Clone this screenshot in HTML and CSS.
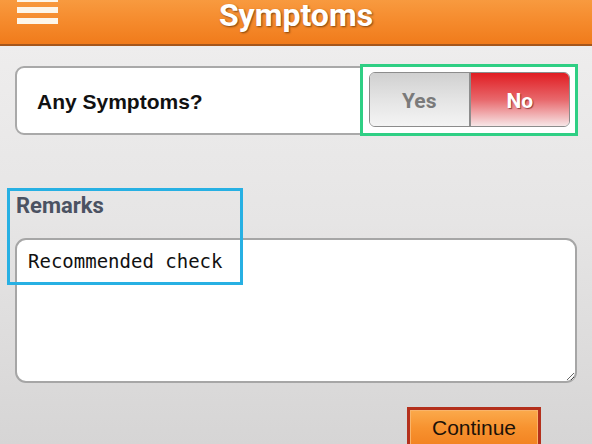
FILE: index.html
```html
<!DOCTYPE html>
<html lang="en">
<head>
<meta charset="utf-8">
<title>Symptoms</title>
<link rel="stylesheet" href="styles.css">
</head>
<body>
<header class="topbar">
  <div class="menu" aria-label="Menu"><span></span><span></span><span></span></div>
  <h1 class="title">Symptoms</h1>
  <div class="spacer"></div>
</header>
<main class="content">
  <section class="card">
    <span class="question">Any Symptoms?</span>
    <div class="mark-green">
      <div class="toggle">
        <button class="opt yes" type="button">Yes</button>
        <button class="opt no" type="button">No</button>
      </div>
    </div>
  </section>
  <section class="remarks">
    <label class="remarks-label" for="remarks">Remarks</label>
    <textarea id="remarks" class="remarks-box">Recommended check</textarea>
    <div class="mark-blue"></div>
  </section>
  <div class="actions">
    <button class="continue" type="button">Continue</button>
  </div>
</main>
</body>
</html>
```

FILE: styles.css
```css
html, body {
  margin: 0;
  padding: 0;
  height: 100%;
  overflow: hidden;
}
body {
  background: linear-gradient(to bottom, #f0efef 0%, #e6e5e5 50%, #d6d5d5 100%);
  font-family: "Liberation Sans", Arial, sans-serif;
}
.topbar {
  height: 44px;
  border-bottom: 2px solid #a4561c;
  background: linear-gradient(to bottom, #f89a3f 0%, #f58a2c 50%, #f07b1b 100%);
  display: grid;
  grid-template-columns: 1fr auto 1fr;
  align-items: start;
  overflow: hidden;
}
.menu {
  display: flex;
  flex-direction: column;
  gap: 5px;
  margin: -4px 0 0 17px;
  width: 41px;
}
.menu span {
  display: block;
  height: 6px;
  background: #fdf6ea;
}
.title {
  margin: 0;
  font-family: Roboto, "Liberation Sans", sans-serif;
  font-weight: 700;
  font-size: 32px;
  line-height: 30px;
  color: #ffffff;
  text-shadow: 1px 1px 2px rgba(80, 40, 0, 0.7);
}
.content {
  padding: 0 15px;
}
.card {
  margin-top: 20px;
  height: 65px;
  border: 2px solid #a9a9a9;
  border-radius: 9px;
  background: #ffffff;
  display: flex;
  align-items: center;
  justify-content: space-between;
  padding-left: 20px;
}
.question {
  font-weight: 700;
  font-size: 21px;
  color: #111111;
  padding-top: 2px;
}
.mark-green {
  margin: -4px -3px -3px 0;
  border: 3px solid #2fcf84;
  background: #ffffff;
  padding: 5px 5px 6px 6px;
}
.toggle {
  display: flex;
  width: 199px;
  height: 53px;
  border: 1px solid #8c8c8c;
  border-radius: 6px;
  overflow: hidden;
}
.opt {
  flex: 1;
  border: none;
  margin: 0;
  padding: 2px 0 0 0;
  font-family: Roboto, "Liberation Sans", sans-serif;
  font-weight: 700;
  font-size: 21px;
}
.yes {
  background: linear-gradient(to bottom, #d0d0d0 0%, #e4e4e4 50%, #f4f4f4 100%);
  color: #7a7a7a;
  border-right: 2px solid #8d8d8d;
}
.no {
  background: linear-gradient(to bottom, #e01d22 0%, #e8676b 50%, #f7e6e7 100%);
  color: #ffffff;
  text-shadow: 1px 1px 1px rgba(90, 0, 0, 0.6);
}
.remarks {
  position: relative;
  margin-top: 58px;
  display: flex;
  flex-direction: column;
}
.remarks-label {
  font-family: Roboto, "Liberation Sans", sans-serif;
  font-weight: 700;
  font-size: 22px;
  line-height: normal;
  color: #4b5262;
  margin-left: 1px;
}
.remarks-box {
  margin-top: 20px;
  height: 145px;
  box-sizing: border-box;
  border: 2px solid #a6a6a6;
  border-radius: 11px;
  background: #ffffff;
  padding: 10px 11px 8px;
  font-family: "DejaVu Sans Mono", monospace;
  font-size: 19px;
  line-height: normal;
  color: #111111;
  outline: none;
}
.mark-blue {
  position: absolute;
  left: -8px;
  top: -5px;
  width: 230px;
  height: 91px;
  border: 3px solid #27b0e3;
  pointer-events: none;
}
.actions {
  display: flex;
  justify-content: flex-end;
  padding-right: 36px;
  margin-top: 24px;
}
.continue {
  width: 134px;
  height: 42px;
  border: 3px solid #b4301c;
  background: linear-gradient(to bottom, #fbaa4c 0%, #f7922f 50%, #f28221 100%);
  box-shadow: inset 0 0 0 1px #f9b46a;
  font-family: "Liberation Sans", Arial, sans-serif;
  font-size: 21px;
  color: #1d1208;
  padding: 6px 0 0 0;
  display: flex;
  justify-content: center;
  align-items: flex-start;
}
```
